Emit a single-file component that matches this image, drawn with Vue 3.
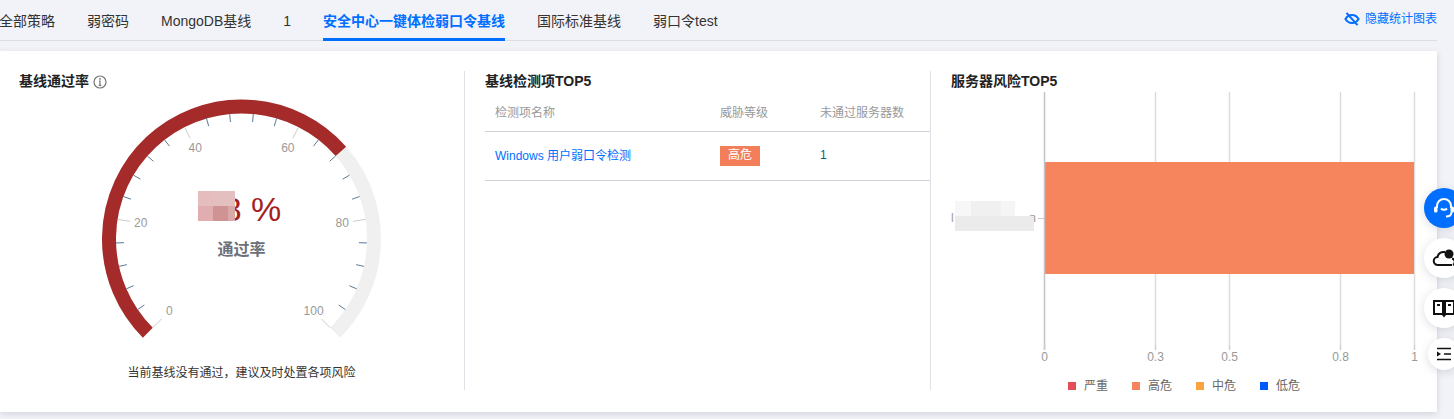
<script setup>
const tabs = ['全部策略', '弱密码', 'MongoDB基线', '1', '安全中心一键体检弱口令基线', '国际标准基线', '弱口令test']
const activeTab = 4

const cx = 241.5
const cy = 146
const rOuter = 139.5
const trackW = 14
const r = rOuter - trackW / 2
const rInner = rOuter - trackW
const rad = (d) => (d * Math.PI) / 180
const pt = (deg, radius) => [cx + radius * Math.cos(rad(deg)), cy - radius * Math.sin(rad(deg))]
const arc = (from, to) => {
  const [x1, y1] = pt(from, r)
  const [x2, y2] = pt(to, r)
  const large = from - to > 180 ? 1 : 0
  return `M${x1} ${y1}A${r} ${r} 0 ${large} 1 ${x2} ${y2}`
}
const trackPath = arc(225, -45)
const valuePath = arc(225, 225 - 270 * 0.68)

const ticks = []
for (let i = 0; i <= 25; i++) {
  const deg = 225 - (270 * i) / 25
  const major = i % 5 === 0
  const [x1, y1] = pt(deg, rInner)
  const [x2, y2] = pt(deg, rInner - (major ? 12.5 : 8))
  ticks.push({ x1, y1, x2, y2, major })
}
const labels = [0, 20, 40, 60, 80, 100].map((v) => {
  const deg = 225 - (270 * v) / 100
  const [x, y] = pt(deg, 102)
  return { v, x, y }
})
const maskBlocks = [
  { x: 198, y: 98, w: 15, h: 15, c: '#e5bdbd' },
  { x: 213, y: 98, w: 22, h: 15, c: '#e3bfbf' },
  { x: 198, y: 113, w: 15, h: 15, c: '#e0aeb0' },
  { x: 213, y: 113, w: 15, h: 15, c: '#d09393' },
  { x: 228, y: 113, w: 7, h: 15, c: '#d9a8a8' },
]

const rows = [{ name: 'Windows 用户弱口令检测', level: '高危', count: 1 }]

const gridLines = [
  { x: 113, label: '0' },
  { x: 224, label: '0.3' },
  { x: 298, label: '0.5' },
  { x: 409, label: '0.8' },
  { x: 483, label: '1' },
]
const legend = [
  { label: '严重', color: '#e54d5b' },
  { label: '高危', color: '#f5845f' },
  { label: '中危', color: '#f9a43f' },
  { label: '低危', color: '#0059ff' },
]
</script>

<template>
  <div class="page">
    <div class="tabbar">
      <div class="tabs">
        <div v-for="(t, i) in tabs" :key="t" class="tab" :class="{ active: i === activeTab }">{{ t }}</div>
      </div>
      <div class="toggle">
        <svg width="16" height="16" viewBox="0 0 16 16" fill="none" stroke="#006eff">
          <path d="M1.400 8C3 5.400 5.300 4 8 4S13 5.400 14.600 8C13 10.600 10.700 12 8 12S3 10.600 1.400 8Z" stroke-width="2" />
          <path d="M2.500 1.800L13.500 14.200" stroke-width="2" />
        </svg>
        <span>隐藏统计图表</span>
      </div>
    </div>

    <div class="card">
      <section class="panel gauge-panel">
        <div class="title gauge-title">
          <span>基线通过率</span>
          <svg width="14" height="14" viewBox="0 0 14 14" fill="none" stroke="#777" stroke-width="1.200">
            <circle cx="7" cy="7" r="6" />
            <path d="M6 6.200H7V10.300M5.700 10.400h2.600" />
            <circle cx="7" cy="3.900" r=".9" fill="#777" stroke="none" />
          </svg>
        </div>
        <svg class="gauge" width="464" height="268" viewBox="0 0 464 268">
          <path :d="trackPath" fill="none" stroke="#f0f0f0" :stroke-width="trackW" />
          <path :d="valuePath" fill="none" stroke="#a52a2a" :stroke-width="trackW" />
          <line
            v-for="(t, i) in ticks"
            :key="i"
            :x1="t.x1"
            :y1="t.y1"
            :x2="t.x2"
            :y2="t.y2"
            :stroke="t.major ? '#cccccc' : '#5b7a96'"
            stroke-width="1"
          />
          <text
            v-for="l in labels"
            :key="l.v"
            class="gauge-label"
            :x="l.x"
            :y="l.y"
            text-anchor="middle"
            dominant-baseline="central"
          >{{ l.v }}</text>
          <text class="gauge-value" x="242.500" y="128" text-anchor="middle">68 %</text>
          <rect v-for="(b, i) in maskBlocks" :key="'m' + i" :x="b.x" :y="b.y" :width="b.w" :height="b.h" :fill="b.c" />
          <text class="gauge-name" :x="cx" y="162" text-anchor="middle">通过率</text>
        </svg>
        <div class="caption">当前基线没有通过，建议及时处置各项风险</div>
      </section>

      <section class="panel table-panel">
        <div class="title">基线检测项TOP5</div>
        <div class="row head">
          <div class="c1">检测项名称</div>
          <div class="c2">威胁等级</div>
          <div class="c3">未通过服务器数</div>
        </div>
        <div v-for="row in rows" :key="row.name" class="row body">
          <div class="c1 link">{{ row.name }}</div>
          <div class="c2"><span class="tag">{{ row.level }}</span></div>
          <div class="c3 count">{{ row.count }}</div>
        </div>
      </section>

      <section class="panel chart-panel">
        <div class="title chart-title">服务器风险TOP5</div>
        <svg class="chart" width="506" height="270" viewBox="0 0 506 270">
          <line
            v-for="g in gridLines.slice(1)"
            :key="g.x"
            :x1="g.x + 0.5"
            :x2="g.x + 0.5"
            y1="0"
            y2="253"
            stroke="#dcdcdc"
            stroke-width="1.500"
          />
          <rect x="113" y="70" width="370" height="112" fill="#f6845d" />
          <line x1="113.500" x2="113.500" y1="0" y2="258" stroke="#c4c4c4" stroke-width="1.500" />
          <line x1="107" x2="113" y1="126.500" y2="126.500" stroke="#c8c8c8" />
          <line v-for="g in gridLines" :key="'t' + g.x" :x1="g.x + 0.5" :x2="g.x + 0.5" y1="253" y2="258" stroke="#cfcfcf" stroke-width="1.500" />
          <text v-for="g in gridLines" :key="'l' + g.x" class="axis-label" :x="g.x + 0.5" y="269" text-anchor="middle">{{ g.label }}</text>
          <text class="axis-label" x="20" y="130">l</text>
          <text class="axis-label" x="105" y="130" text-anchor="end">n</text>
          <rect x="24" y="109" width="16" height="15" fill="#f7f7f7" />
          <rect x="40" y="109" width="30" height="15" fill="#f0f0f0" />
          <rect x="70" y="109" width="14" height="15" fill="#f5f5f5" />
          <rect x="24" y="124" width="79" height="15" fill="#ebebeb" />
        </svg>
        <div class="legend">
          <div v-for="l in legend" :key="l.label" class="legend-item">
            <i :style="{ background: l.color }"></i>
            <span>{{ l.label }}</span>
          </div>
        </div>
      </section>
    </div>

    <div class="floats">
      <div class="fab primary">
        <svg width="24" height="24" viewBox="0 0 24 24" fill="none" stroke="#fff" stroke-width="2">
          <path d="M5 12v-2a7 7 0 0 1 14 0v2" />
          <rect x="2" y="10.500" width="3.500" height="6" rx="1.500" fill="#fff" stroke="none" />
          <rect x="18.500" y="10.500" width="3.500" height="6" rx="1.500" fill="#fff" stroke="none" />
          <path d="M9 12.500c1.500 1.600 4.500 1.600 6 0" />
          <path d="M19.500 16c0 3-2 4.500-5.500 4.500" />
        </svg>
      </div>
      <div class="fab">
        <svg width="24" height="24" viewBox="0 0 24 24" fill="none" stroke="#111" stroke-width="2">
          <path d="M7 19H6a4 4 0 0 1-.5-8A6.500 6.500 0 0 1 12 6h1M7 19h13M20 12.500a3.500 3.500 0 0 1 1 6.500" />
          <circle cx="17" cy="8" r="4.500" fill="#111" stroke="none" />
        </svg>
      </div>
      <div class="fab">
        <svg width="24" height="24" viewBox="0 0 24 24" fill="none" stroke="#111" stroke-width="2">
          <path d="M2 5h9v13H2zM13 5h9v13h-9z" />
          <path d="M5 9h3M16 9h3" />
          <path d="M10 19h4l-2 2.500z" fill="#111" stroke="none" />
        </svg>
      </div>
      <div class="fab small">
        <svg width="18" height="18" viewBox="0 0 18 18" fill="none" stroke="#111" stroke-width="1.600">
          <path d="M2 3.500h14M9 9h7M2 14.500h14" />
          <path d="M2 6.500 6 9l-4 2.500z" fill="#111" stroke="none" />
        </svg>
      </div>
    </div>
  </div>
</template>

<style>
html,
body {
  margin: 0;
  background: #f2f3f8;
  overflow: hidden;
}
</style>

<style scoped>
.page {
  position: relative;
  width: 1454px;
  height: 419px;
  overflow: hidden;
  box-sizing: border-box;
  padding-right: 17px;
  font-family: "Liberation Sans", "Noto Sans CJK SC", sans-serif;
  background: #f2f3f8;
  color: #222;
}
.tabbar {
  display: flex;
  align-items: flex-start;
  justify-content: space-between;
  height: 40px;
  border-bottom: 1px solid #dcdee4;
}
.tabs {
  display: flex;
  gap: 32px;
  margin-left: -1px;
}
.tab {
  height: 41px;
  box-sizing: border-box;
  padding-top: 11px;
  font-size: 14px;
  line-height: 20px;
  color: #333;
  white-space: nowrap;
}
.tab.active {
  color: #006eff;
  font-weight: 700;
  border-bottom: 3px solid #006eff;
}
.toggle {
  display: flex;
  align-items: center;
  gap: 5px;
  margin-top: 11px;
  font-size: 12px;
  line-height: 16px;
  color: #006eff;
  white-space: nowrap;
}
.card {
  display: flex;
  height: 361px;
  margin-top: 10px;
  box-sizing: border-box;
  padding: 20px 0 22px;
  background: #fff;
  box-shadow: 0 2px 6px rgba(54, 58, 80, 0.16);
}
.panel {
  box-sizing: border-box;
  height: 319px;
}
.gauge-panel {
  width: 465px;
  border-right: 1px solid #dfe1e6;
}
.table-panel {
  width: 466px;
  border-right: 1px solid #dfe1e6;
  padding-left: 20px;
}
.chart-panel {
  flex: 1;
}
.title {
  height: 22px;
  font-size: 14px;
  line-height: 20px;
  font-weight: 700;
  color: #222;
}
.gauge-title {
  display: flex;
  align-items: flex-start;
  gap: 4px;
  padding-left: 19px;
}
.gauge-title svg {
  margin-top: 4px;
}
.gauge {
  display: block;
}
.gauge-label {
  font-size: 12px;
  fill: #999;
}
.gauge-value {
  font-size: 34px;
  fill: #a51f1f;
}
.gauge-name {
  font-size: 16px;
  font-weight: 700;
  fill: #6b7079;
}
.caption {
  height: 20px;
  margin-top: 2px;
  font-size: 12px;
  line-height: 20px;
  text-align: center;
  color: #333;
  padding-left: 19px;
  width: 464px;
  box-sizing: border-box;
}
.row {
  display: flex;
  align-items: center;
  box-sizing: border-box;
  font-size: 12px;
  border-bottom: 1px solid #cfd2d9;
}
.row.head {
  height: 39px;
  color: #999;
  padding-bottom: 2px;
}
.row.body {
  height: 49px;
}
.c1 {
  width: 235px;
  padding-left: 10px;
  box-sizing: border-box;
}
.c2 {
  width: 100px;
}
.link {
  position: relative;
  top: -2px;
  color: #006eff;
}
.tag {
  display: block;
  width: 40px;
  height: 20px;
  background: #f37e5a;
  color: #fff;
  line-height: 19px;
  text-align: center;
}
.count {
  position: relative;
  top: -1px;
  color: #0b5f78;
}
.chart-title {
  padding-left: 20px;
}
.chart {
  display: block;
  overflow: visible;
  margin-top: -1px;
}
.axis-label {
  font-size: 12px;
  fill: #999;
}
.legend {
  display: flex;
  gap: 24px;
  padding-left: 137px;
  margin-top: 15px;
}
.legend-item {
  display: flex;
  align-items: center;
  gap: 8px;
  font-size: 12px;
  line-height: 18px;
  color: #666;
}
.legend-item i {
  display: block;
  width: 8px;
  height: 8px;
}
.floats {
  position: absolute;
  left: 1424px;
  top: 188px;
  display: flex;
  flex-direction: column;
  align-items: center;
  gap: 10px;
  width: 40px;
}
.fab {
  display: flex;
  align-items: center;
  justify-content: center;
  width: 40px;
  height: 40px;
  border-radius: 50%;
  background: #fff;
  box-shadow: 0 2px 10px rgba(60, 70, 100, 0.18);
}
.fab.primary {
  background: #006eff;
}
.fab.small {
  width: 32px;
  height: 32px;
}
</style>
